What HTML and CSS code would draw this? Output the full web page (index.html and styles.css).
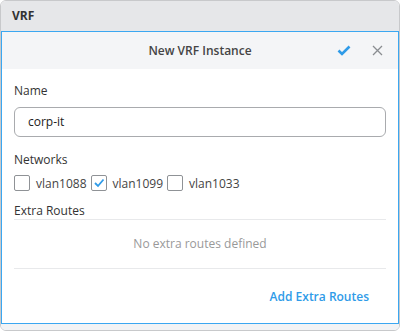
FILE: index.html
```html
<!DOCTYPE html>
<html lang="en">
<head>
    <meta charset="UTF-8">
    <meta name="viewport" content="width=device-width, initial-scale=1.0">
    <title>VRF</title>
    <link rel="stylesheet" href="styles.css">
</head>
<body>
    <div class="card">
        <div class="card-header">VRF</div>
        <div class="card-body">
            <div class="panel">
                <div class="panel-header">
                    <span class="panel-title">New VRF Instance</span>
                    <div class="panel-actions">
                        <svg class="icon-check" width="14" height="11" viewBox="0 0 14 11">
                            <path d="M1.5 5.5 L5 9 L12.5 1.5" fill="none" stroke="#2f9be8" stroke-width="2.6"/>
                        </svg>
                        <svg class="icon-close" width="11" height="11" viewBox="0 0 11 11">
                            <path d="M1 1 L10 10 M10 1 L1 10" fill="none" stroke="#8a8d91" stroke-width="1.3"/>
                        </svg>
                    </div>
                </div>
                <div class="panel-content">
                    <label class="field-label">Name</label>
                    <div class="text-input">corp-it</div>

                    <label class="field-label networks-label">Networks</label>
                    <div class="checks">
                        <span class="check-box"></span><span class="check-text">vlan1088</span>
                        <span class="check-box checked">
                            <svg width="14" height="14" viewBox="0 0 14 14">
                                <path d="M3 7 L6 10 L11.5 3.5" fill="none" stroke="#2f9be8" stroke-width="1.8"/>
                            </svg>
                        </span><span class="check-text">vlan1099</span>
                        <span class="check-box"></span><span class="check-text">vlan1033</span>
                    </div>

                    <div class="routes-label">Extra Routes</div>
                    <div class="routes-empty">No extra routes defined</div>

                    <div class="panel-footer">
                        <a class="add-link">Add Extra Routes</a>
                    </div>
                </div>
            </div>
        </div>
    </div>
</body>
</html>
```

FILE: styles.css
```css
body {
    margin: 0;
    font-family: "Open Sans", Arial, sans-serif;
    font-size: 12px;
    color: #333;
    background: #fff;
}
.card {
    width: 400px;
    height: 331px;
    box-sizing: border-box;
    border: 1px solid #c8c9cb;
    border-radius: 6px;
    overflow: hidden;
    display: flex;
    flex-direction: column;
}
.card-header {
    height: 30px;
    background: #e6e7e9;
    font-weight: 700;
    line-height: 30px;
    padding-left: 11px;
    color: #333;
}
.card-body {
    flex: 1;
    background: #f2f3f5;
    padding-bottom: 6px;
}
.panel {
    height: 100%;
    box-sizing: border-box;
    border: 1px solid #3ba7f1;
    background: #fff;
    display: flex;
    flex-direction: column;
}
.panel-header {
    height: 37px;
    flex-shrink: 0;
    background: #f4f5f7;
    display: flex;
    align-items: center;
    justify-content: center;
    position: relative;
}
.panel-title {
    font-weight: 600;
    color: #444;
}
.panel-actions {
    position: absolute;
    right: 15px;
    top: 13px;
    display: flex;
    align-items: center;
    gap: 21px;
}
.panel-content {
    padding: 13px 12px 0 12px;
    flex: 1;
    display: flex;
    flex-direction: column;
}
.field-label {
    display: block;
    line-height: 18px;
    color: #333;
}
.text-input {
    margin-top: 7px;
    height: 30px;
    box-sizing: border-box;
    border: 1px solid #a9abae;
    border-radius: 6px;
    padding-left: 13px;
    line-height: 28px;
    color: #222;
}
.networks-label {
    margin-top: 14px;
}
.checks {
    display: flex;
    align-items: center;
    margin-top: 5px;
    height: 18px;
}
.check-box {
    width: 14px;
    height: 14px;
    border: 1px solid #8f9296;
    border-radius: 2px;
    background: #fff;
    display: inline-flex;
    align-items: center;
    justify-content: center;
}
.check-box svg {
    display: block;
}
.check-text {
    margin: 0 4px 0 6px;
    color: #444;
}
.routes-label {
    margin-top: 10px;
    line-height: 17px;
    border-bottom: 1px solid #e8e9eb;
    color: #333;
}
.routes-empty {
    height: 48px;
    line-height: 48px;
    text-align: center;
    color: #999;
    border-bottom: 1px solid #e8e9eb;
}
.panel-footer {
    flex: 1;
    display: flex;
    justify-content: flex-end;
    align-items: center;
    padding-right: 17px;
}
.add-link {
    color: #2f9be8;
    font-weight: 600;
    cursor: pointer;
}
```
